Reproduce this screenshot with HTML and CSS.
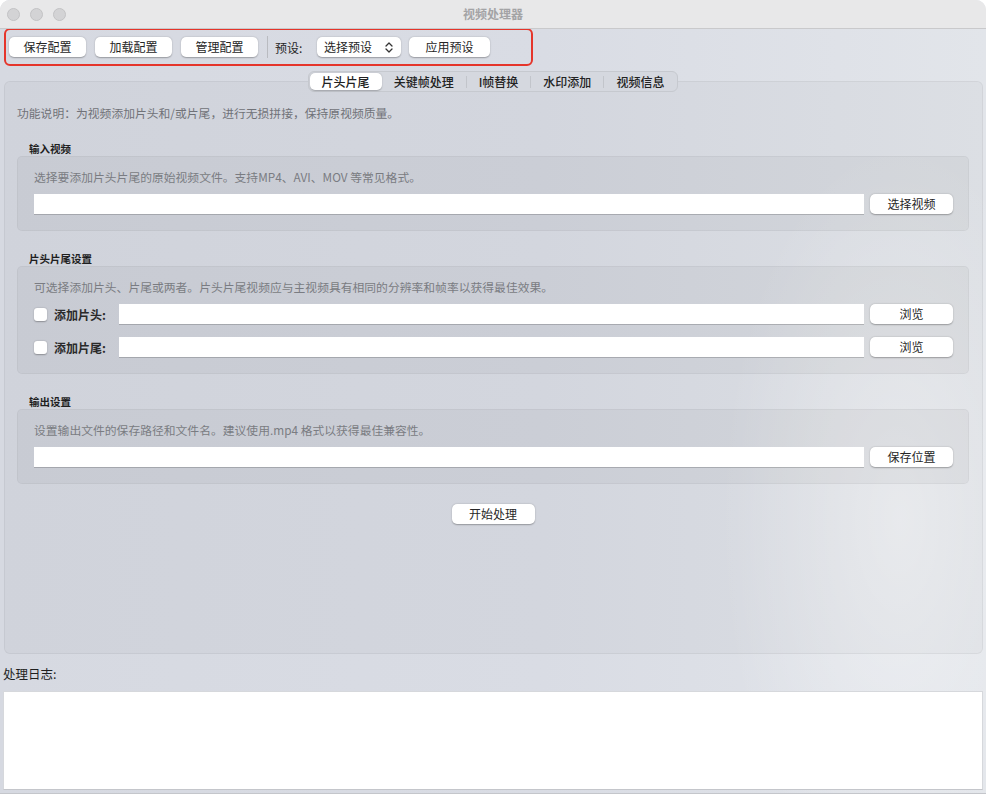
FILE: index.html
```html
<!DOCTYPE html>
<html lang="zh-CN">

<head>
    <meta charset="UTF-8">
    <meta name="viewport" content="width=device-width, initial-scale=1.0">
    <title>视频处理器</title>
    <link rel="stylesheet" href="styles.css">
</head>

<body>
    <div class="window">
        <!-- Title bar -->
        <div class="titlebar">
            <div class="lights"><span></span><span></span><span></span></div>
            <div class="title">视频处理器</div>
        </div>

        <!-- Config toolbar -->
        <div class="toolbar">
            <button class="btn tool-btn">保存配置</button>
            <button class="btn tool-btn">加载配置</button>
            <button class="btn tool-btn">管理配置</button>
            <span class="sep"></span>
            <span class="tool-label">预设:</span>
            <div class="btn select">
                <span>选择预设</span>
                <svg width="8" height="11" viewBox="0 0 8 11">
                    <path d="M1 4 L4 1 L7 4 M1 7 L4 10 L7 7" fill="none" stroke="#333" stroke-width="1.3" stroke-linecap="round" stroke-linejoin="round"/>
                </svg>
            </div>
            <button class="btn apply-btn">应用预设</button>
        </div>

        <!-- Tabs -->
        <div class="tabs-row">
            <div class="tabs">
                <span class="tab active">片头片尾</span>
                <span class="tab">关键帧处理</span>
                <span class="tab-sep"></span>
                <span class="tab">I帧替换</span>
                <span class="tab-sep"></span>
                <span class="tab">水印添加</span>
                <span class="tab-sep"></span>
                <span class="tab">视频信息</span>
            </div>
        </div>

        <!-- Tab panel -->
        <div class="panel">
            <p class="intro">功能说明：为视频添加片头和/或片尾，进行无损拼接，保持原视频质量。</p>

            <div class="group-title">输入视频</div>
            <div class="group">
                <p class="hint">选择要添加片头片尾的原始视频文件。支持MP4、AVI、MOV 等常见格式。</p>
                <div class="row">
                    <input class="field" type="text">
                    <button class="btn side-btn">选择视频</button>
                </div>
            </div>

            <div class="group-title">片头片尾设置</div>
            <div class="group">
                <p class="hint">可选择添加片头、片尾或两者。片头片尾视频应与主视频具有相同的分辨率和帧率以获得最佳效果。</p>
                <div class="row">
                    <span class="check"></span>
                    <span class="row-label">添加片头:</span>
                    <input class="field" type="text">
                    <button class="btn side-btn">浏览</button>
                </div>
                <div class="row row-gap">
                    <span class="check"></span>
                    <span class="row-label">添加片尾:</span>
                    <input class="field" type="text">
                    <button class="btn side-btn">浏览</button>
                </div>
            </div>

            <div class="group-title">输出设置</div>
            <div class="group">
                <p class="hint">设置输出文件的保存路径和文件名。建议使用.mp4 格式以获得最佳兼容性。</p>
                <div class="row">
                    <input class="field" type="text">
                    <button class="btn side-btn">保存位置</button>
                </div>
            </div>

            <div class="start-row">
                <button class="btn start-btn">开始处理</button>
            </div>
        </div>

        <!-- Log -->
        <div class="log-label">处理日志:</div>
        <div class="log"></div>
    </div>
</body>

</html>
```

FILE: styles.css
```css
/* Base */
body, html {
    margin: 0;
    padding: 0;
    background-color: #ffffff;
    font-family: "Noto Sans CJK SC", "Noto Sans", sans-serif;
}

p {
    margin: 0;
}

.window {
    width: 986px;
    height: 793px;
    display: flex;
    flex-direction: column;
    border-radius: 10px 10px 0 0;
    overflow: hidden;
    background:
        radial-gradient(ellipse 180px 380px at 900px 520px, rgba(255, 255, 255, 0.45), rgba(255, 255, 255, 0)),
        linear-gradient(90deg, #d6d9e1 0%, #d9dce4 55%, #e2e5ea 100%);
    border-bottom: 1px solid #c4c6cb;
}

/* Title bar */
.titlebar {
    height: 28px;
    flex-shrink: 0;
    background-color: #e8e8e9;
    border-bottom: 1px solid #c9c9cb;
    display: flex;
    align-items: center;
    position: relative;
}

.lights {
    display: flex;
    gap: 10px;
    padding-left: 7px;
}

.lights span {
    width: 11px;
    height: 11px;
    border-radius: 50%;
    background-color: #d3d3d5;
    border: 0.5px solid #c2c2c4;
}

.title {
    position: absolute;
    left: 0;
    right: 0;
    text-align: center;
    font-size: 12px;
    font-weight: 600;
    color: #a3a3a5;
    line-height: 28px;
}

/* Buttons */
.btn {
    font-family: inherit;
    font-size: 12px;
    color: #262626;
    background-color: #ffffff;
    border: none;
    border-radius: 5px;
    box-shadow: 0 0.5px 1.5px rgba(0, 0, 0, 0.3);
    height: 20px;
    padding: 0;
    line-height: 20px;
    text-align: center;
}

/* Toolbar */
.toolbar {
    width: 522px;
    height: 34px;
    flex-shrink: 0;
    margin-left: 4px;
    border: 2px solid #e5352b;
    border-radius: 6px;
    display: flex;
    align-items: center;
    padding-left: 3px;
    gap: 9px;
    margin-top: -1px;
}

.tool-btn {
    width: 77px;
}

.sep {
    width: 1px;
    height: 22px;
    background-color: #b9bbc0;
    margin-right: -2px;
}

.tool-label {
    font-size: 12px;
    color: #262626;
    width: 35px;
}

.select {
    width: 84px;
    display: flex;
    align-items: center;
    justify-content: space-between;
    padding: 0 8px 0 7px;
    box-sizing: border-box;
    margin-left: -2px;
    margin-right: -1px;
}

.apply-btn {
    width: 81px;
}

/* Tabs */
.tabs-row {
    display: flex;
    justify-content: center;
    margin-top: 5px;
    margin-bottom: -11px;
    position: relative;
    z-index: 1;
}

.tabs {
    display: flex;
    align-items: center;
    height: 19px;
    padding: 0 1px;
    background-color: #d5d8df;
    border: 0.5px solid #c6c9cf;
    border-radius: 6px;
}

.tab {
    font-size: 12px;
    font-weight: 500;
    color: #222222;
    padding: 0 12px;
    line-height: 17px;
}

.tab.active {
    background-color: #ffffff;
    border-radius: 5px;
    box-shadow: 0 0.5px 1.5px rgba(0, 0, 0, 0.25);
}

.tab-sep {
    width: 1px;
    height: 12px;
    background-color: #c2c5cb;
}

/* Panel */
.panel {
    height: 548px;
    flex-shrink: 0;
    margin: 0 3px 0 4px;
    padding: 23px 13px 0 12px;
    background-color: rgba(0, 0, 0, 0.025);
    border: 1px solid rgba(0, 0, 0, 0.05);
    border-radius: 6px;
}

.intro {
    font-size: 11.8px;
    line-height: 16px;
    color: #707278;
}

.group-title {
    margin-top: 21px;
    padding-left: 12px;
    font-size: 10.5px;
    font-weight: 700;
    line-height: 14px;
    color: #1f1f1f;
}

.group {
    padding: 12px 15px 16px 16px;
    background-color: rgba(0, 0, 0, 0.035);
    border: 1px solid rgba(0, 0, 0, 0.04);
    border-radius: 5px;
}

.hint {
    font-size: 11.8px;
    line-height: 16px;
    color: #7a7c82;
    margin-bottom: 9px;
}

.row {
    display: flex;
    align-items: center;
    height: 20px;
}

.row-gap {
    margin-top: 13px;
}

.field {
    flex: 1;
    height: 20px;
    box-sizing: border-box;
    border: none;
    outline: none;
    background-color: #ffffff;
    box-shadow: 0 1px 0 rgba(0, 0, 0, 0.18);
    padding: 0 4px;
}

.side-btn {
    width: 83px;
    margin-left: 6px;
    flex-shrink: 0;
}

.check {
    width: 13px;
    height: 13px;
    border-radius: 3px;
    background-color: #ffffff;
    box-shadow: 0 0.5px 1.5px rgba(0, 0, 0, 0.3);
    margin-right: 7px;
    flex-shrink: 0;
}

.row-label {
    width: 65px;
    flex-shrink: 0;
    font-size: 12px;
    font-weight: 700;
    color: #2a2a2a;
}

.start-row {
    display: flex;
    justify-content: center;
    margin-top: 20px;
}

.start-btn {
    width: 83px;
}

/* Log */
.log-label {
    font-size: 12.5px;
    line-height: 17px;
    color: #1f1f1f;
    padding: 11px 0 0 3px;
    margin-bottom: 9px;
}

.log {
    height: 97px;
    flex-shrink: 0;
    margin: 0 3px 0 3px;
    background-color: #ffffff;
    border: 0.5px solid #d6d8dc;
    border-bottom: 1px solid #c4c6cb;
}
```
